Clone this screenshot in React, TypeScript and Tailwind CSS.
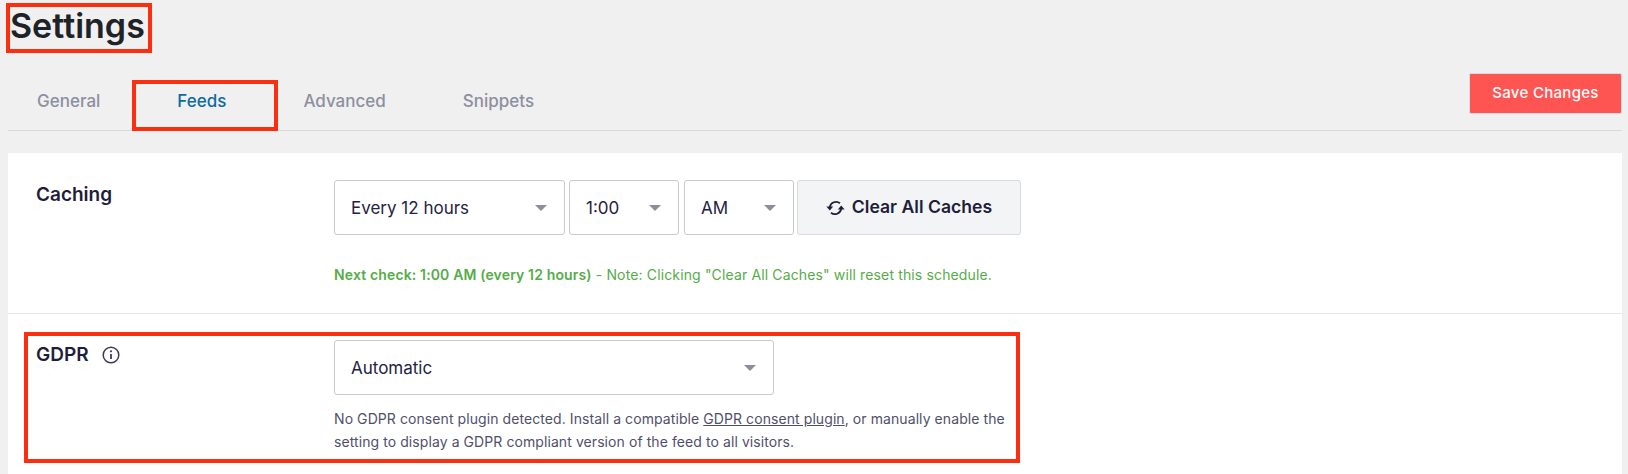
import React from 'react';

const font = "font-['Inter','Liberation_Sans',sans-serif]";

// Native select look: text on the left, small grey caret on the right
const FakeSelect = ({ value, className }: { value: string; className: string }) => (
  <div className={`flex h-[55px] items-center justify-between rounded-[3px] border border-[#c9c9d3] bg-white pl-[16px] pr-[17px] text-[17px] text-[#23233f] ${className}`}>
    <span className="pt-[2px]">{value}</span>
    <span className="h-0 w-0 border-x-[6px] border-t-[6px] border-x-transparent border-t-[#8d8d9b]" />
  </div>
);

const SyncIcon = () => (
  <svg width="19" height="16" viewBox="0 0 19 16" fill="none" stroke="#1e1e3a" strokeWidth="1.8">
    <path d="M14 3.2A6.4 6.4 0 0 0 3.8 7" />
    <path d="M5 12.8A6.4 6.4 0 0 0 15.2 9" />
    <path d="M0.4 6.4h6.8L3.8 10.6z" fill="#1e1e3a" stroke="none" />
    <path d="M11.8 9.6h6.8L15.2 5.4z" fill="#1e1e3a" stroke="none" />
  </svg>
);

const InfoIcon = () => (
  <svg width="18" height="18" viewBox="0 0 18 18" fill="none" stroke="#3b3b58" strokeWidth="1.5">
    <circle cx="9" cy="9" r="7.8" />
    <path d="M9 8v5" strokeWidth="1.8" />
    <circle cx="9" cy="5.3" r="1.1" fill="#3b3b58" stroke="none" />
  </svg>
);

const Annotation = ({ className }: { className: string }) => (
  <div className={`pointer-events-none absolute border-[4px] border-[#fb2f10] ${className}`} />
);

export default function App() {
  const tabs = ['General', 'Feeds', 'Advanced', 'Snippets'];

  return (
    <div className={`relative h-[474px] overflow-hidden bg-[#f0f0f1] pl-[8px] pr-[6px] ${font}`}>
      <h1 className="pt-[2px] pl-[2px] text-[34px] leading-[48px] font-semibold text-[#1d2327]">Settings</h1>

      {/* Tabs + save */}
      <div className="mt-[3px] flex h-[78px] items-start justify-between border-b border-[#d8d8e0]">
        <div className="flex gap-[19px] pt-[35px]">
          {tabs.map(tab => (
            <div
              key={tab}
              className={`px-[29px] text-[17px] leading-[26px] font-medium ${tab === 'Feeds' ? 'text-[#0f6aa0]' : 'text-[#8d8f9f]'}`}
            >
              {tab}
            </div>
          ))}
        </div>
        <button className="mt-[20px] flex h-[41px] w-[153px] items-center justify-center rounded-[2px] border border-[#d9d9e0] bg-[#ff5552] text-[15px] font-medium tracking-[0.3px] text-white">
          Save Changes
        </button>
      </div>

      {/* Settings card */}
      <div className="mt-[22px] bg-white">
        <div className="flex h-[161px] border-b border-[#e6e6ea] pt-[27px]">
          <div className="w-[326px] pt-[2px] pl-[28px] text-[19px] leading-[26px] font-semibold text-[#1e1e3a]">Caching</div>
          <div>
            <div className="flex">
              <FakeSelect value="Every 12 hours" className="w-[231px]" />
              <FakeSelect value="1:00" className="ml-[4px] w-[110px]" />
              <FakeSelect value="AM" className="ml-[5px] w-[110px]" />
              <button className="ml-[3px] flex h-[55px] w-[224px] items-center justify-center gap-[7px] rounded-[3px] border border-[#d9d9e0] bg-[#f3f4f6] text-[17.6px] font-semibold text-[#1e1e3a]">
                <SyncIcon />
                Clear All Caches
              </button>
            </div>
            <p className="mt-[30px] text-[14px] leading-[20px] tracking-[0.14px] text-[#56ac48]">
              <strong className="font-semibold">Next check: 1:00 AM (every 12 hours)</strong> - Note: Clicking "Clear All Caches" will reset this schedule.
            </p>
          </div>
        </div>

        <div className="flex h-[200px] pt-[26px]">
          <div className="mt-[2px] flex h-[26px] w-[326px] items-center gap-[13px] pl-[28px] text-[19px] font-semibold text-[#1e1e3a]">
            GDPR
            <InfoIcon />
          </div>
          <div>
            <FakeSelect value="Automatic" className="w-[440px]" />
            <p className="mt-[12px] w-[690px] text-[14px] leading-[23px] tracking-[0.08px] text-[#50506a]">
              No GDPR consent plugin detected. Install a compatible <a className="underline">GDPR consent plugin</a>, or manually enable the setting to display a GDPR compliant version of the feed to all visitors.
            </p>
          </div>
        </div>
      </div>

      {/* Red annotation boxes */}
      <Annotation className="left-[6px] top-[3px] h-[50px] w-[146px]" />
      <Annotation className="left-[132px] top-[80px] h-[51px] w-[146px]" />
      <Annotation className="left-[24px] top-[332px] h-[131px] w-[996px]" />
    </div>
  );
}
